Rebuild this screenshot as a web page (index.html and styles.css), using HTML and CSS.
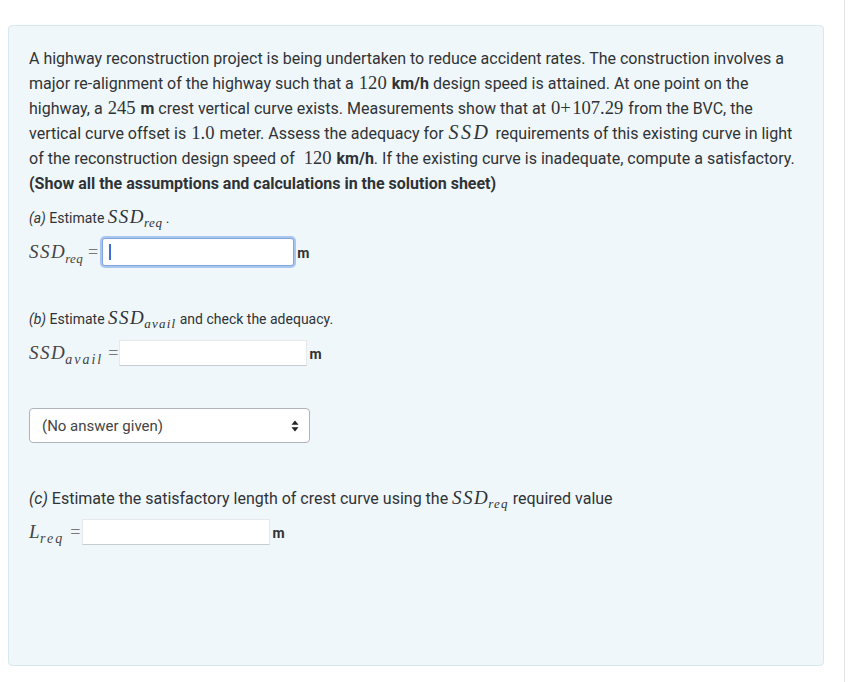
FILE: index.html
```html
<!DOCTYPE html>
<html>
<head>
<meta charset="utf-8">
<link rel="stylesheet" href="styles.css">
</head>
<body>
<div class="page">
  <div class="panel">
    <p class="intro">A highway reconstruction project is being undertaken to reduce accident rates. The construction involves a major re-alignment of the highway such that a <span class="mn">120</span> <b>km/h</b> design speed is attained. At one point on the highway, a <span class="mn">245</span> <b>m</b> crest vertical curve exists. Measurements show that at <span class="mn">0+&#8202;107.29</span> from the BVC, the vertical curve offset is <span class="mn">1.0</span> meter. Assess the adequacy for <span class="mi">SSD</span> requirements of this existing curve in light of the reconstruction design speed of&nbsp; <span class="mn">120</span> <b>km/h</b>. If the existing curve is inadequate, compute a satisfactory. <b>(Show all the assumptions and calculations in the solution sheet)</b></p>

    <p class="part part-a"><i>(a)</i> Estimate <span class="mi">SSD</span><span class="sub">req</span> .</p>
    <div class="eq eq-a">
      <span class="lhs"><span class="mi">SSD</span><span class="sub sub-eq">req</span></span>
      <span class="eqs">=</span>
      <span class="field focus"><span class="caret"></span></span>
      <span class="unit">m</span>
    </div>

    <p class="part part-b"><i>(b)</i> Estimate <span class="mi">SSD</span><span class="sub sub-wide">avail</span> and check the adequacy.</p>
    <div class="eq eq-b">
      <span class="lhs"><span class="mi">SSD</span><span class="sub sub-eq sub-spread">avail</span></span>
      <span class="eqs">=</span>
      <span class="field"></span>
      <span class="unit">m</span>
    </div>

    <div class="select">
      <span class="select-text">(No answer given)</span>
      <svg class="arrows" width="8" height="12" viewBox="0 0 8 12"><path d="M4 0.5 L7.5 4.8 L0.5 4.8 Z M4 11.5 L7.5 7.2 L0.5 7.2 Z" fill="#222"/></svg>
    </div>

    <p class="part part-c"><i>(c)</i> Estimate the satisfactory length of crest curve using the <span class="mi">SSD</span><span class="sub sub-wide">req</span> required value</p>
    <div class="eq eq-c">
      <span class="lhs"><span class="mi">L</span><span class="sub sub-eq sub-spread">req</span></span>
      <span class="eqs">=</span>
      <span class="field"></span>
      <span class="unit">m</span>
    </div>
  </div>
</div>
</body>
</html>
```

FILE: styles.css
```css
html, body {
  margin: 0;
  padding: 0;
  background: #ffffff;
}

body {
  font-family: Roboto, "Liberation Sans", sans-serif;
  color: #2f3336;
}

.page {
  width: 845px;
  height: 682px;
  box-sizing: border-box;
  border-right: 1px solid #e3e3e3;
  padding: 25px 20px 0 8px;
}

.panel {
  background: #f0f7fb;
  border: 1px solid #d8e7ee;
  border-radius: 4px;
  height: 641px;
  box-sizing: border-box;
  padding: 20px 20px 0 20px;
}

.intro {
  margin: 0;
  font-size: 16px;
  line-height: 25px;
}

.intro b { font-weight: 700; }

.mn {
  font-family: "Liberation Serif", "DejaVu Serif", serif;
  font-size: 18.6px;
  line-height: 1;
  padding: 0 1px;
}

.mi {
  font-family: "Liberation Serif", "DejaVu Serif", serif;
  font-style: italic;
  font-size: 19px;
  letter-spacing: 1.5px;
  line-height: 1;
}

.intro .mi {
  font-size: 20px;
  letter-spacing: 2.5px;
  padding: 0 1px;
}

.sub {
  font-family: "Liberation Serif", "DejaVu Serif", serif;
  font-style: italic;
  font-size: 13px;
  line-height: 1;
  position: relative;
  top: 4px;
  margin-left: -1px;
  letter-spacing: 0.5px;
}

.sub-wide { letter-spacing: 1.2px; }

.sub-eq {
  top: 5px;
  letter-spacing: 0.3px;
}

.sub-eq.sub-spread {
  font-size: 14px;
  letter-spacing: 2px;
}

.part {
  margin: 0;
  font-size: 14px;
  line-height: 20px;
}

.part-a { margin-top: 11px; }
.part-b { margin-top: 41px; }
.part-c { margin-top: 45px; font-size: 16px; }

.eq {
  display: flex;
  align-items: center;
  height: 30px;
}

.eq-a { margin-top: 9px; }
.eq-b { margin-top: 9px; }
.eq-c { margin-top: 8px; }

.lhs { color: #444; }

.eqs {
  font-family: "Liberation Serif", "DejaVu Serif", serif;
  font-size: 18px;
  color: #777;
  margin: 0 1px 0 5px;
}

.eq-c .eqs { margin-left: 6px; margin-right: 2px; }

.field {
  display: block;
  width: 188px;
  height: 26px;
  box-sizing: border-box;
  background: #fff;
  border: 1px solid #e6e8ea;
  border-bottom-color: #c9ccce;
}

.field.focus {
  width: 192px;
  height: 28px;
  border: 1px solid #7fa6df;
  border-radius: 3px;
  box-shadow: 0 0 0 2px #a9c6ee;
  margin-left: 3px;
  margin-right: 1px;
  position: relative;
}

.caret {
  position: absolute;
  left: 6px;
  top: 5px;
  width: 2px;
  height: 16px;
  background: #3a6fd0;
}

.unit {
  font-weight: 700;
  font-size: 14px;
  margin-left: 2px;
  color: #333;
  padding-top: 2px;
}

.select {
  display: flex;
  align-items: center;
  justify-content: space-between;
  width: 281px;
  height: 35px;
  box-sizing: border-box;
  margin-top: 40px;
  padding: 0 10px 0 12px;
  background: #fff;
  border: 1px solid #aeb4b8;
  border-radius: 4px;
}

.select-text {
  font-size: 15px;
  color: #444;
}

.arrows { display: block; }
```
